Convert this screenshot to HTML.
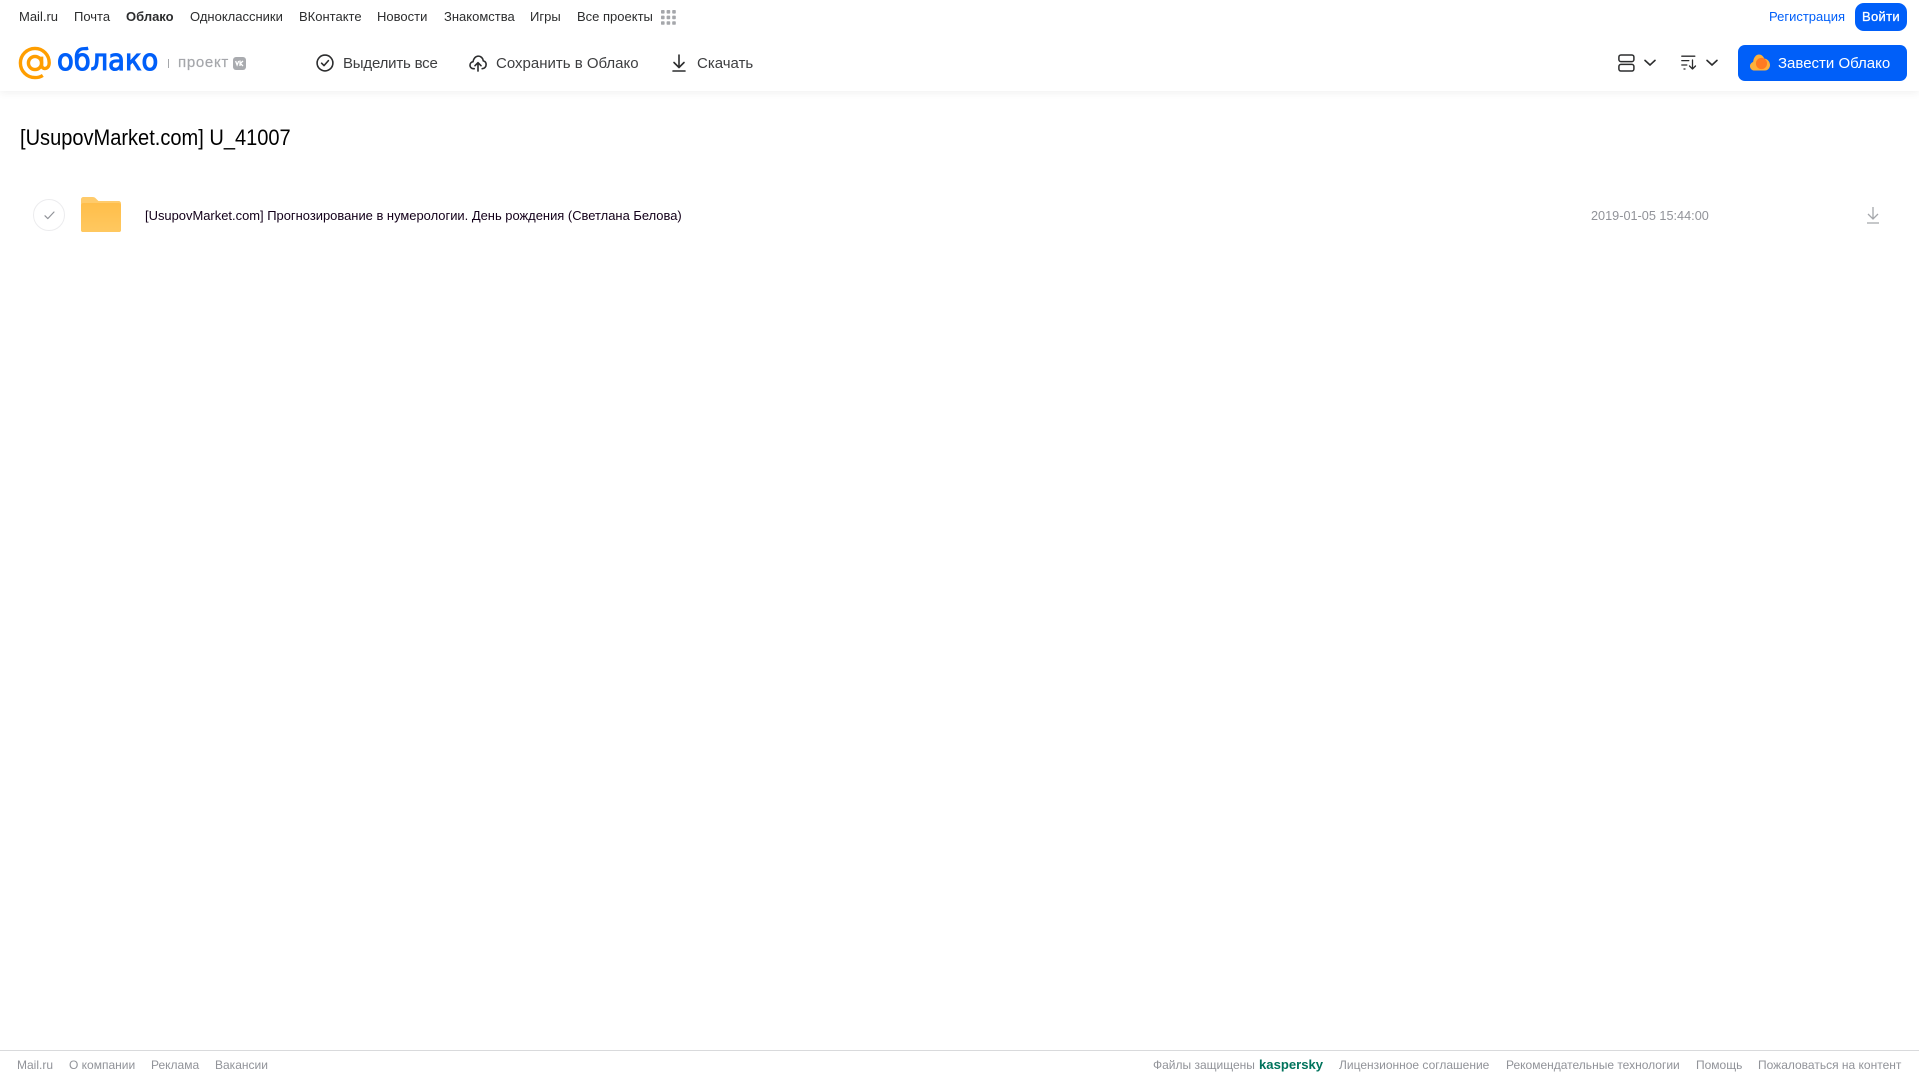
<!DOCTYPE html>
<html lang="ru">
<head>
<meta charset="utf-8">
<title>Облако</title>
<style>
html,body{margin:0;padding:0;background:#fff;width:1919px;height:1079px;overflow:hidden;font-family:"Liberation Sans","DejaVu Sans",sans-serif}
.t{position:absolute;white-space:nowrap;line-height:1}
.n{font-size:13px;color:#2c2d2e;top:10px}
.a{font-size:15px;color:#3d3e40;top:56px}
.f{font-size:12px;color:#919399;top:1059px}
svg{position:absolute;overflow:visible}
#hd{position:absolute;left:0;top:0;width:1919px;height:91px;background:#fff;box-shadow:0 2px 8px rgba(0,0,0,.06)}
</style>
</head>
<body>
<div id="hd"></div>
<span class="t n" style="left:19px">Mail.ru</span>
<span class="t n" style="left:74px">Почта</span>
<span class="t n" style="left:126px;font-weight:bold">Облако</span>
<span class="t n" style="left:190px">Одноклассники</span>
<span class="t n" style="left:299px">ВКонтакте</span>
<span class="t n" style="left:377px">Новости</span>
<span class="t n" style="left:444px">Знакомства</span>
<span class="t n" style="left:530px">Игры</span>
<span class="t n" style="left:577px">Все проекты</span>
<svg style="left:661px;top:10px" width="15" height="15" fill="#a5a7ab"><rect x="0" y="0" width="3.6" height="3.6" rx=".8"/><rect x="5.6" y="0" width="3.6" height="3.6" rx=".8"/><rect x="11.2" y="0" width="3.6" height="3.6" rx=".8"/><rect x="0" y="5.6" width="3.6" height="3.6" rx=".8"/><rect x="5.6" y="5.6" width="3.6" height="3.6" rx=".8"/><rect x="11.2" y="5.6" width="3.6" height="3.6" rx=".8"/><rect x="0" y="11.2" width="3.6" height="3.6" rx=".8"/><rect x="5.6" y="11.2" width="3.6" height="3.6" rx=".8"/><rect x="11.2" y="11.2" width="3.6" height="3.6" rx=".8"/></svg>
<span class="t n" style="left:1769px;color:#005ff9">Регистрация</span>
<div style="position:absolute;left:1855px;top:3px;width:52px;height:28px;background:#005ff9;border-radius:9px"></div>
<span class="t n" style="left:1862px;color:#fff;font-size:13px;top:10px;letter-spacing:.3px;-webkit-text-stroke:.3px #fff">Войти</span>

<!-- logo -->
<svg style="left:18px;top:46px" width="34" height="34" viewBox="0 0 34 34" fill="none" stroke="#ff9e00" stroke-width="3.4"><circle cx="17" cy="17" r="6.6"/><path d="M23.6 10.6V19c0 5 7.6 5 7.6-2.2C31.2 8.8 24.8 2.4 17 2.4 8.9 2.4 2.4 8.9 2.4 17S8.9 31.6 17 31.6c3 0 5.6-.8 7.8-2.2"/></svg>
<span class="t" style="left:57px;top:46px;font-size:29px;color:#005ff9;-webkit-text-stroke:1.1px #005ff9;font-family:'DejaVu Sans',sans-serif;transform-origin:0 0;transform:scaleX(.945)">облако</span>
<div style="position:absolute;left:168px;top:59px;width:1px;height:9px;background:#a5a7ab"></div>
<span class="t" style="left:178px;top:55px;font-size:15px;color:#a5a7ab;letter-spacing:.7px;-webkit-text-stroke:.2px #a5a7ab">проект</span>
<div style="position:absolute;left:233px;top:57px;width:13px;height:13px;border-radius:3px;background:#a9abaf"></div>
<svg style="left:235px;top:60px" width="9" height="7" viewBox="0 0 9 7" fill="none" stroke="#fff" stroke-width="1.3"><path d="M.6 1l1.5 4 1.6-4M5 .5v5.5M8 1L5.4 3.4 8 6"/></svg>

<!-- actions -->
<svg style="left:316px;top:54px" width="18" height="18" viewBox="0 0 18 18" fill="none" stroke="#2c2d2e" stroke-width="1.6"><circle cx="9" cy="9" r="7.9"/><path d="M5.6 9.2l2.4 2.4 4.4-5" stroke-linecap="round" stroke-linejoin="round"/></svg>
<span class="t a" style="left:343px;letter-spacing:-.2px">Выделить все</span>
<svg style="left:469px;top:55px" width="18" height="17" viewBox="0 0 19 18" fill="none" stroke="#2c2d2e" stroke-width="1.7" stroke-linecap="round" stroke-linejoin="round"><path d="M5.5 14.5H4.8C2.6 14.5 1 12.8 1 10.8c0-1.9 1.4-3.4 3.2-3.7C4.8 3.6 7 1.2 9.8 1.2c2.8 0 5 2.2 5.3 5 1.9.4 3 2 3 3.9 0 2.4-1.7 4.4-4.2 4.4"/><path d="M9.5 17V8.3M6.3 11.3l3.2-3.2 3.2 3.2"/></svg>
<span class="t a" style="left:496px">Сохранить в Облако</span>
<svg style="left:671px;top:54px" width="16" height="18" viewBox="0 0 16 18" fill="none" stroke="#2c2d2e" stroke-width="1.6" stroke-linecap="round" stroke-linejoin="round"><path d="M8 1v12M3 8.5l5 5 5-5M2 17h12"/></svg>
<span class="t a" style="left:697px">Скачать</span>

<!-- view / sort -->
<svg style="left:1618px;top:54px" width="17" height="18" viewBox="0 0 17 18" fill="none" stroke="#2c2d2e" stroke-width="1.5"><rect x=".9" y="1" width="15" height="6.6" rx="2"/><rect x=".9" y="10.4" width="15" height="6.6" rx="2"/></svg>
<svg style="left:1644px;top:59px" width="12" height="8" viewBox="0 0 12 8" fill="none" stroke="#2c2d2e" stroke-width="1.6" stroke-linecap="round" stroke-linejoin="round"><path d="M1 1.4l5 4.6 5-4.6"/></svg>
<svg style="left:1681px;top:55px" width="16" height="15" viewBox="0 0 16 15" fill="none" stroke="#2c2d2e" stroke-width="1.3" stroke-linecap="round" stroke-linejoin="round"><path d="M.8 1.2h13M.8 5.6h7M.8 10h5M3 14h1M11.5 5v9M8.5 11l3 3 3-3"/></svg>
<svg style="left:1706px;top:59px" width="12" height="8" viewBox="0 0 12 8" fill="none" stroke="#2c2d2e" stroke-width="1.6" stroke-linecap="round" stroke-linejoin="round"><path d="M1 1.4l5 4.6 5-4.6"/></svg>

<div style="position:absolute;left:1738px;top:45px;width:169px;height:36px;background:#005ff9;border-radius:7px"></div>
<svg style="left:1750px;top:54px" width="20" height="17" viewBox="0 0 20 17"><path d="M4.5 16.5C2 16.5 0 14.6 0 12.2c0-2 1.3-3.6 3.1-4.2C3.6 3.5 6 .5 9 .5c2.3 0 4.3 1.7 5.2 4C17.6 5 20 7.8 20 11c0 3-2.2 5.5-5 5.5z" fill="#ffb03a"/><circle cx="11.5" cy="9.5" r="5.6" fill="#ff7a22"/></svg>
<span class="t" style="left:1778px;top:56px;font-size:15px;color:#fff">Завести Облако</span>

<!-- title -->
<span class="t" style="left:20px;top:127px;font-size:22px;color:#000;transform-origin:0 0;transform:scaleX(.911)">[UsupovMarket.com] U_41007</span>

<!-- row -->
<div style="position:absolute;left:33px;top:199px;width:30px;height:30px;border:1px solid #ececee;border-radius:50%"></div>
<svg style="left:44px;top:211px" width="11" height="9" viewBox="0 0 11 9" fill="none" stroke="#919399" stroke-width="1.2" stroke-linecap="round" stroke-linejoin="round"><path d="M1 4.8l2.8 2.8L10 1"/></svg>
<svg style="left:81px;top:197px" width="40" height="35" viewBox="0 0 40 35"><defs><linearGradient id="g" x1="0" y1="0" x2="0" y2="1"><stop offset="0" stop-color="#ffbe4a"/><stop offset="1" stop-color="#ffc860"/></linearGradient></defs><path d="M0 2.5C0 1 1 0 2.5 0h9c1.5 0 2.5.6 3.500 1.600l2.400 2.400h20.100C39 4 40 5 40 6.500V33c0 1.200-.8 2-2 2H2c-1.200 0-2-.8-2-2z" fill="#ffcb6b"/><path d="M0 8.500C0 7 1 6 2.500 6h35C39 6 40 7 40 8.500V33c0 1.200-.8 2-2 2H2c-1.200 0-2-.8-2-2z" fill="url(#g)"/></svg>
<span class="t" style="left:145px;top:210px;font-size:12.95px;color:#13001a">[UsupovMarket.com] Прогнозирование в нумерологии. День рождения (Светлана Белова)</span>
<span class="t" style="left:1591px;top:210px;font-size:12.7px;color:#919399">2019-01-05 15:44:00</span>
<svg style="left:1866px;top:206px" width="14" height="18" viewBox="0 0 14 18" fill="none" stroke="#a5a7ab" stroke-width="1.3"><path d="M7 1v12M2 8l5 5 5-5M1 17h12"/></svg>

<!-- footer -->
<div style="position:absolute;left:0;top:1050px;width:1919px;height:1px;background:#d9dadc"></div>
<span class="t f" style="left:17px">Mail.ru</span>
<span class="t f" style="left:69px">О компании</span>
<span class="t f" style="left:151px">Реклама</span>
<span class="t f" style="left:215px">Вакансии</span>
<span class="t f" style="left:1153px">Файлы защищены</span>
<span class="t" style="left:1259px;top:1058px;font-size:13.1px;font-weight:bold;color:#00735c">kaspersky</span>
<span class="t f" style="left:1339px">Лицензионное соглашение</span>
<span class="t f" style="left:1506px">Рекомендательные технологии</span>
<span class="t f" style="left:1696px">Помощь</span>
<span class="t f" style="left:1758px">Пожаловаться на контент</span>
</body>
</html>
